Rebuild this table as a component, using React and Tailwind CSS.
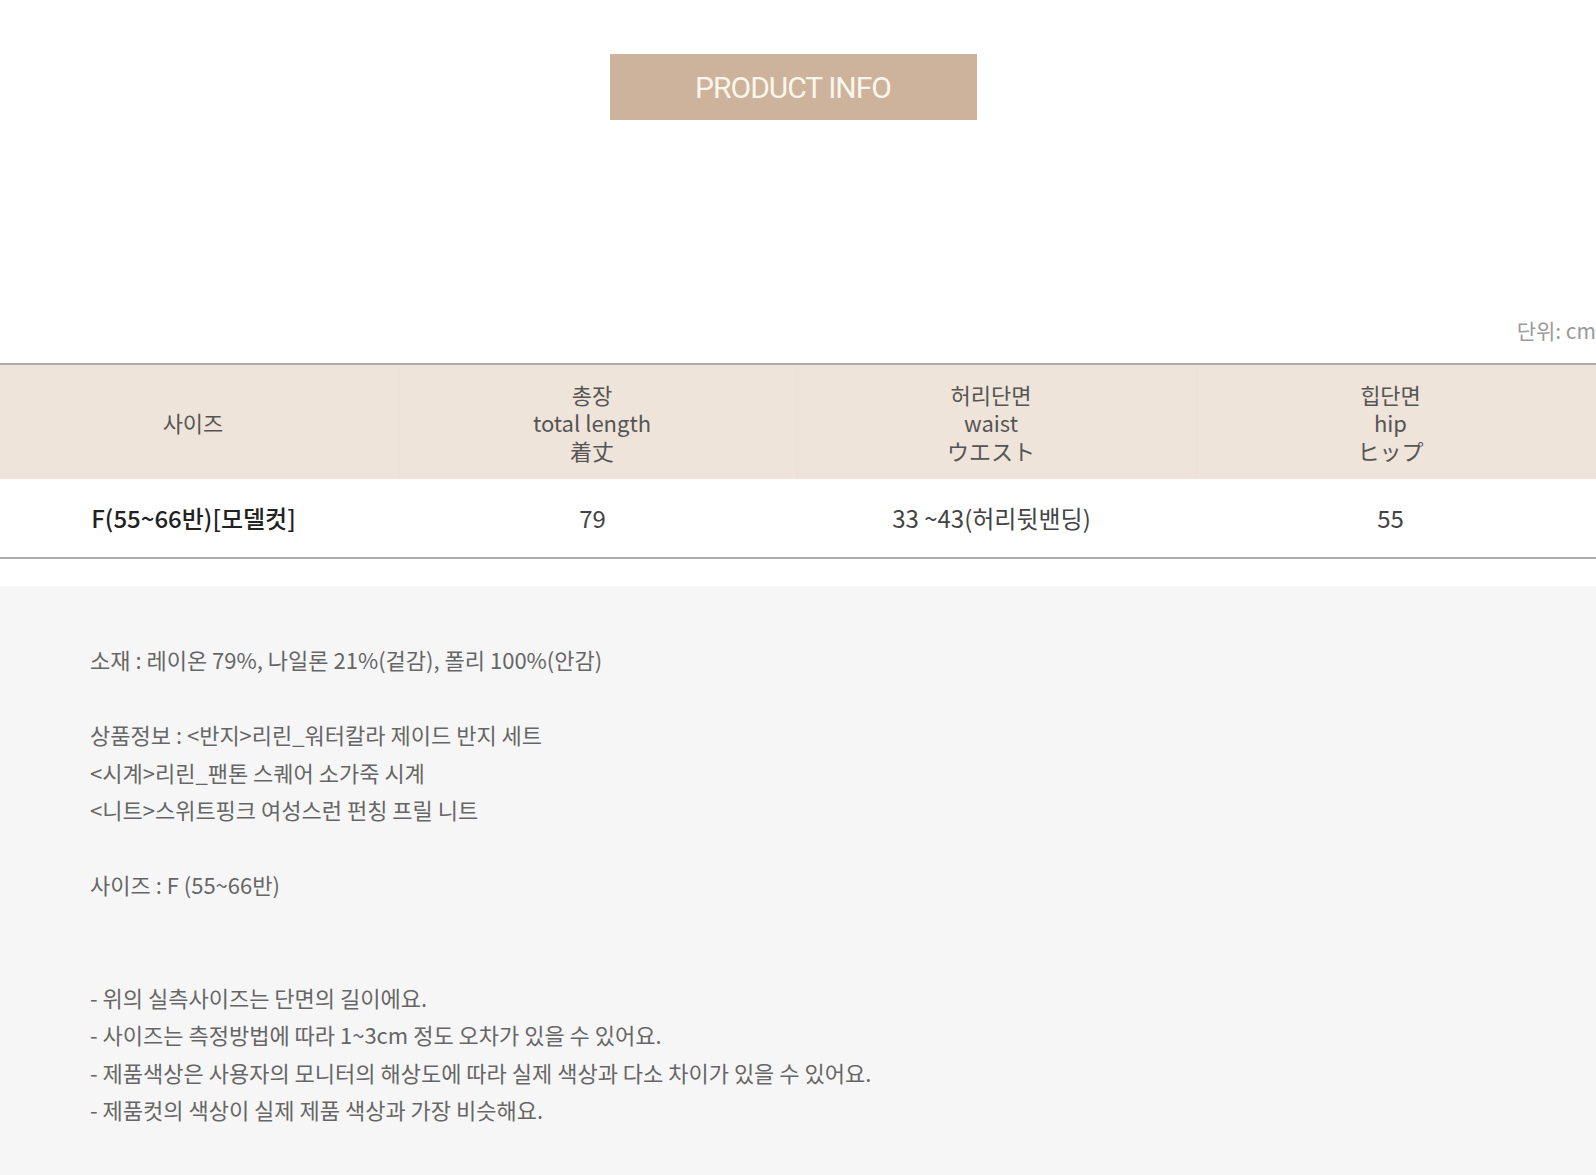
const headers = [
  { ko: "사이즈" },
  { ko: "총장", en: "total length", jp: "着丈" },
  { ko: "허리단면", en: "waist", jp: "ウエスト" },
  { ko: "힙단면", en: "hip", jp: "ヒップ" },
];

const row = ["F(55~66반)[모델컷]", "79", "33 ~43(허리뒷밴딩)", "55"];

const notes = [
  "- 위의 실측사이즈는 단면의 길이에요.",
  "- 사이즈는 측정방법에 따라 1~3cm 정도 오차가 있을 수 있어요.",
  "- 제품색상은 사용자의 모니터의 해상도에 따라 실제 색상과 다소 차이가 있을 수 있어요.",
  "- 제품컷의 색상이 실제 제품 색상과 가장 비슷해요.",
];

export default function App() {
  return (
    <div className="w-full min-h-[1175px] flex flex-col bg-white overflow-hidden font-['Noto_Sans_CJK_KR',sans-serif]">
      {/* 타이틀 배너 */}
      <div className="flex justify-center pt-[54px] pr-[10px]">
        <div className="w-[367px] h-[66px] bg-[#cdb39b] flex items-center justify-center">
          <span className="font-['Roboto',sans-serif] text-[30px] font-normal tracking-[-1px] text-[#fbf6ec]">
            PRODUCT INFO
          </span>
        </div>
      </div>

      {/* 단위 */}
      <div className="flex justify-end mt-[198px] h-[24px] items-center">
        <span className="text-[21px] text-[#9a9a9a] leading-none">단위: cm</span>
      </div>

      {/* 사이즈 표 */}
      <div className="mt-[21px] border-t-2 border-b-2 border-[#ababab]">
        <div className="grid grid-cols-4 bg-[#eee4da] h-[114px]">
          {headers.map((h, i) => (
            <div
              key={i}
              className={`flex flex-col items-center justify-center pr-[12px] text-[22px] leading-[28px] text-[#555] ${
                i < 3 ? "border-r border-[#ebe0d5]" : ""
              }`}
            >
              <span>{h.ko}</span>
              {h.en && <span>{h.en}</span>}
              {h.jp && (
                <span className="font-['Noto_Sans_CJK_JP',sans-serif]">{h.jp}</span>
              )}
            </div>
          ))}
        </div>
        <div className="grid grid-cols-4 h-[78px]">
          {row.map((c, i) => (
            <div
              key={i}
              className={`flex items-center justify-center pr-[12px] text-[24px] ${
                i === 0 ? "text-[#222] font-medium" : "text-[#444]"
              }`}
            >
              {c}
            </div>
          ))}
        </div>
      </div>

      {/* 상품 설명 */}
      <div className="flex-1 mt-[27px] bg-[#f6f6f6] pt-[55px] pb-[44px] pl-[90px] text-[22px] leading-[37.5px] text-[#666]">
        <p>소재 : 레이온 79%, 나일론 21%(겉감), 폴리 100%(안감)</p>
        <p>&nbsp;</p>
        <p>상품정보 : &lt;반지&gt;리린_워터칼라 제이드 반지 세트</p>
        <p>&lt;시계&gt;리린_팬톤 스퀘어 소가죽 시계</p>
        <p>&lt;니트&gt;스위트핑크 여성스런 펀칭 프릴 니트</p>
        <p>&nbsp;</p>
        <p>사이즈 : F (55~66반)</p>
        <p>&nbsp;</p>
        <p>&nbsp;</p>
        {notes.map((n, i) => (
          <p key={i}>{n}</p>
        ))}
      </div>
    </div>
  );
}
